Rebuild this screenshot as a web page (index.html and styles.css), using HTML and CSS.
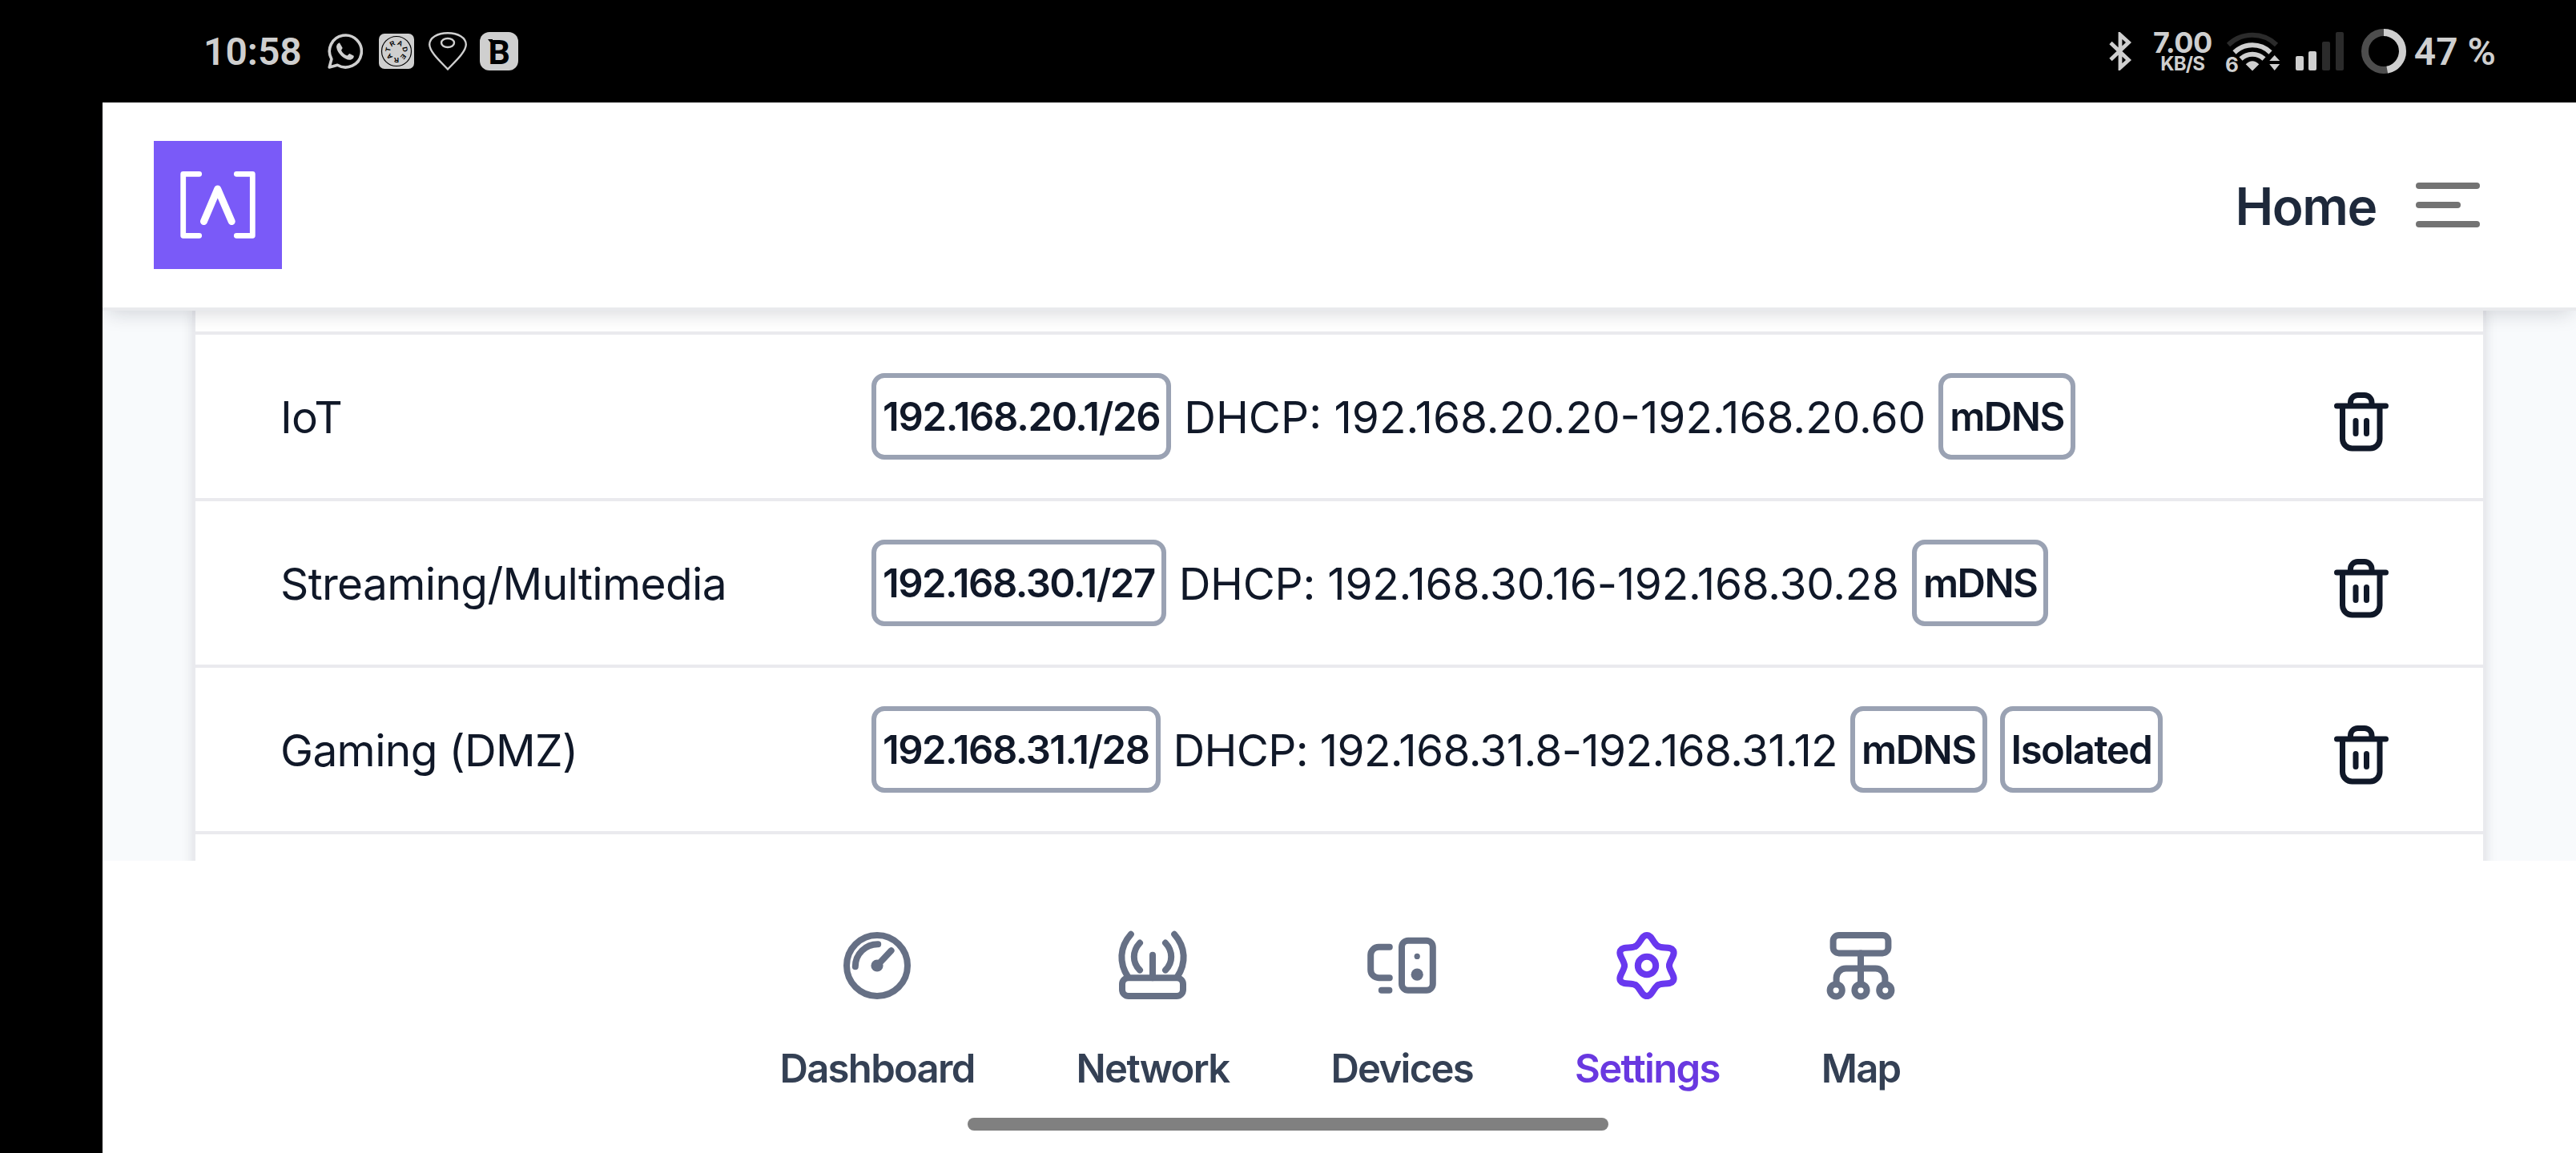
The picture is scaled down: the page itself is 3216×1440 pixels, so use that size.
FILE: index.html
```
<!DOCTYPE html>
<html lang="en">
<head>
  <meta charset="UTF-8" />
  <title>Settings</title>
  <link rel="stylesheet" href="styles.css">
</head>
<body>

  <!-- shared icons -->
  <svg class="defs" width="0" height="0">
    <symbol id="trash" viewBox="0 0 68 74">
      <path d="M3.500 17h61M20.500 17v-4.500a9 9 0 0 1 9-9h8.500a9 9 0 0 1 9 9V17M10.500 17v41a12 12 0 0 0 12 12h22.500a12 12 0 0 0 12-12V17M27 35.500v16M40.500 35.500v16" />
    </symbol>
    <path id="tooth" d="M-3.500-6.060C-2.100-6.860-1.600-9.500 0-9.500S2.100-6.860 3.500-6.060" />
  </svg>

  <div class="status-bar">
    <div class="status-left">
      <span class="time">10:58</span>
      <svg class="whatsapp" width="44" height="44" viewBox="0 0 44 44">
        <path d="M2.200 42l2.700-10.200A20 20 0 1 1 12.300 39.300z" fill="none" stroke="#cfcfcf" stroke-width="3.600" stroke-linejoin="round" />
        <path d="M15 11.500c-1.200-.4-4.300 2-3.900 5.800 1 7.300 9.600 15.500 16.500 15.500 3 0 5.600-2.600 5.100-5l-5.300-2.700c-1.200.4-1.900 2.400-3.100 2.300-3.200-1-5.600-3.500-7.200-6.500.2-1.300 1.600-1.900 1.500-3.100z" fill="#cfcfcf" />
      </svg>
      <svg class="tradera" width="44" height="44" viewBox="0 0 44 44">
        <rect width="44" height="44" rx="7" />
        <circle cx="22" cy="22" r="18.500" />
        <g>
          <text x="22" y="14" transform="rotate(-78 22 22)">T</text>
          <text x="22" y="14" transform="rotate(-28 22 22)">R</text>
          <text x="22" y="14" transform="rotate(24 22 22)">A</text>
          <text x="22" y="14" transform="rotate(78 22 22)">D</text>
          <text x="22" y="14" transform="rotate(129 22 22)">E</text>
          <text x="22" y="14" transform="rotate(180 22 22)">R</text>
          <text x="22" y="14" transform="rotate(232 22 22)">A</text>
        </g>
      </svg>
      <svg class="pin" width="48" height="48" viewBox="0 0 48 48" fill="none" stroke="#cfcfcf" stroke-width="2.400">
        <path d="M24 46.500C16 38 1.200 25 1.200 15.500 1.200 7 11 1.200 24 1.200S46.800 7 46.800 15.500C46.800 25 32 38 24 46.500z" />
        <ellipse cx="24" cy="13.500" rx="8" ry="5.500" />
      </svg>
      <svg class="b-app" width="48" height="48" viewBox="0 0 48 48">
        <rect width="48" height="48" rx="12" fill="#cfcfcf" />
        <path d="M10 9h6v3.800h-3z" />
        <text x="10.500" y="39.500">B</text>
      </svg>
    </div>

    <div class="status-right">
      <svg class="bluetooth" width="28" height="48" viewBox="0 0 28 48">
        <path d="M2 13.500L24.500 35 14 44.500V3.500l10.500 9.500L2 34.500" />
      </svg>
      <div class="speed">
        <span class="speed-value">7.00</span>
        <span class="speed-unit">KB/S</span>
      </div>
      <svg class="wifi" width="68" height="52" viewBox="0 0 68 52">
        <path d="M3 16A43 43 0 0 1 63 16" stroke="#2b2b2b" />
        <path d="M10.500 25.500a32 32 0 0 1 45 0M18.500 33.500a21 21 0 0 1 29 0" stroke="#cfcfcf" />
        <path class="solid" d="M33 48.500l-8.300-8.300q8.300-8 16.600 0zM60.700 29l6.500 7H54.200zM54.200 40h13l-6.500 8z" />
        <text x="-1" y="50">6</text>
      </svg>
      <svg class="signal" width="60" height="48" viewBox="0 0 60 48">
        <rect x="0" y="30" width="10" height="18" rx="2" fill="#cfcfcf" />
        <rect x="16" y="24" width="10" height="24" rx="2" fill="#cfcfcf" />
        <rect x="33" y="12" width="10" height="36" rx="2" fill="#2b2b2b" />
        <rect x="50" y="0" width="10" height="48" rx="2" fill="#2b2b2b" />
      </svg>
      <svg class="battery" width="56" height="56" viewBox="0 0 56 56">
        <circle cx="28" cy="28" r="23.500" stroke="#4d4d4d" />
        <circle cx="28" cy="28" r="23.500" stroke="#cfcfcf" pathLength="100" stroke-dasharray="47 53" transform="rotate(-90 28 28)" />
      </svg>
      <span class="percent">47 %</span>
    </div>
  </div>

  <div class="app">
    <header class="header">
      <svg class="logo" width="160" height="160" viewBox="0 0 160 160">
        <rect width="160" height="160" fill="#7a5af8" />
        <path d="M56.700 41.300h-20v77h20M103.300 41.300h20v77h-20" stroke-width="6.800" />
        <path d="M62.500 100.500L79.700 60l17.500 40.500" stroke-width="9" />
      </svg>
      <div class="header-right">
        <span class="page-name">Home</span>
        <div class="burger">
          <i></i>
          <i class="short"></i>
          <i></i>
        </div>
      </div>
    </header>

    <main class="content">
      <div class="card">
        <div class="row row-cut"></div>
        <div class="row">
          <div class="name">IoT</div>
          <div class="info">
            <span class="badge badge-wide">192.168.20.1/26</span>
            <span class="dhcp">DHCP: 192.168.20.20-192.168.20.60</span>
            <span class="badge">mDNS</span>
          </div>
          <svg class="trash" width="68" height="74"><use href="#trash" /></svg>
        </div>
        <div class="row">
          <div class="name">Streaming/Multimedia</div>
          <div class="info">
            <span class="badge">192.168.30.1/27</span>
            <span class="dhcp dhcp-snug">DHCP: 192.168.30.16-192.168.30.28</span>
            <span class="badge">mDNS</span>
          </div>
          <svg class="trash" width="68" height="74"><use href="#trash" /></svg>
        </div>
        <div class="row">
          <div class="name">Gaming (DMZ)</div>
          <div class="info">
            <span class="badge">192.168.31.1/28</span>
            <span class="dhcp dhcp-tight">DHCP: 192.168.31.8-192.168.31.12</span>
            <span class="badge">mDNS</span>
            <span class="badge">Isolated</span>
          </div>
          <svg class="trash" width="68" height="74"><use href="#trash" /></svg>
        </div>
        <div class="row"></div>
      </div>
    </main>

    <nav class="nav">
      <div class="nav-item">
        <svg viewBox="0 0 24 24">
          <circle cx="12" cy="12" r="9.500" />
          <path d="M5.200 12.300a7 7 0 0 1 7.100-7M12 12l4.400-4.700" />
          <circle class="dot" cx="12" cy="12" r="1.900" />
        </svg>
        <span>Dashboard</span>
      </div>
      <div class="nav-item">
        <svg viewBox="0 0 24 24">
          <rect x="2.500" y="15.800" width="19" height="5.700" rx="2" />
          <path d="M12 15.800V8.700M5.200 2.200c-3.600 4.100-3.700 9-.9 13.300M18.800 2.200c3.600 4.100 3.700 9 .9 13.300M8 4.900c-2.400 2.600-2.400 6.100 0 8.500M16 4.900c2.400 2.600 2.400 6.100 0 8.500" />
        </svg>
        <span>Network</span>
      </div>
      <div class="nav-item">
        <svg viewBox="0 0 24 24">
          <rect x="12" y="4.200" width="9.700" height="15.500" rx="2" />
          <path d="M8.200 6.200H4.800a2.500 2.500 0 0 0-2.500 2.500v4.600a2.500 2.500 0 0 0 2.500 2.500h3.400M5.700 19.700h2.400" />
          <circle class="dot" cx="16.800" cy="9.100" r=".9" />
          <circle class="dot" cx="16.800" cy="14.800" r="1.900" />
        </svg>
        <span>Devices</span>
      </div>
      <div class="nav-item active">
        <svg viewBox="-12 -12 24 24">
          <use href="#tooth" />
          <use href="#tooth" transform="rotate(60)" />
          <use href="#tooth" transform="rotate(120)" />
          <use href="#tooth" transform="rotate(180)" />
          <use href="#tooth" transform="rotate(240)" />
          <use href="#tooth" transform="rotate(300)" />
          <circle r="2.800" />
        </svg>
        <span>Settings</span>
      </div>
      <div class="nav-item">
        <svg viewBox="0 0 24 24">
          <rect x="3.400" y="2.500" width="17.200" height="5.600" rx="1.800" />
          <path d="M12 8.100v9.700M4.400 17.800v-2a3 3 0 0 1 3-2.900h9.200a3 3 0 0 1 3 2.900v2" />
          <circle cx="4.300" cy="19.700" r="1.900" />
          <circle cx="12" cy="19.700" r="1.900" />
          <circle cx="19.700" cy="19.700" r="1.900" />
        </svg>
        <span>Map</span>
      </div>
    </nav>
  </div>

  <div class="home-indicator"></div>

</body>
</html>
```
FILE: styles.css
```
html, body {
  margin: 0;
  padding: 0;
  height: 100%;
  overflow: hidden;
  font-family: Inter, sans-serif;
  background-color: #000;
}

* {
  box-sizing: border-box;
}

svg {
  display: block;
  flex-shrink: 0;
}

.defs {
  position: absolute;
}

/* phone status bar */
.status-bar {
  display: flex;
  justify-content: space-between;
  height: 128px;
  padding: 0 100px 0 254px;
  color: #cfcfcf;
}

.status-left,
.status-right {
  display: flex;
  align-items: center;
}

.time {
  width: 155px;
  font-family: Roboto, sans-serif;
  font-size: 48px;
  font-weight: 600;
}

.tradera {
  margin-left: 20px;
}

.tradera rect {
  fill: #cfcfcf;
}

.tradera circle {
  fill: none;
  stroke: #000;
  stroke-width: 1.2;
}

.tradera text {
  font: bold 8.5px "Liberation Sans", sans-serif;
  text-anchor: middle;
}

.pin {
  margin-left: 18px;
}

.b-app {
  margin-left: 16px;
}

.b-app text {
  font: bold 43px Roboto, sans-serif;
}

.bluetooth path {
  fill: none;
  stroke: #cfcfcf;
  stroke-width: 4.8;
}

.speed {
  display: flex;
  flex-direction: column;
  align-items: center;
  width: 80px;
  margin-left: 24px;
  font-weight: 700;
}

.speed-value {
  font-size: 36px;
  line-height: 30px;
  letter-spacing: -0.6px;
}

.speed-unit {
  font-size: 24px;
  line-height: 23px;
  letter-spacing: -0.8px;
}

.wifi {
  margin: 4px 0 0 14px;
  overflow: visible;
}

.wifi path {
  fill: none;
  stroke-width: 6;
}

.wifi .solid {
  fill: #cfcfcf;
}

.wifi text {
  font: bold 26px Inter, sans-serif;
  fill: #cfcfcf;
}

.signal {
  margin-left: 19px;
}

.battery {
  margin-left: 22px;
}

.battery circle {
  fill: none;
  stroke-width: 9;
}

.percent {
  margin-left: 10px;
  font-family: Roboto, sans-serif;
  font-size: 48px;
  font-weight: 600;
}

/* app window, right of the camera cutout */
.app {
  display: flex;
  flex-direction: column;
  height: 1312px;
  margin-left: 128px;
  background-color: #f8fafc;
}

.header {
  position: relative;
  display: flex;
  justify-content: space-between;
  align-items: center;
  height: 260px;
  padding: 0 120px 0 64px;
  background-color: #fff;
  border-bottom: 4px solid #e9eaed;
  box-shadow: 0 8px 24px -6px rgba(16, 24, 40, 0.18);
}

.logo path {
  fill: none;
  stroke: #fff;
  stroke-linecap: round;
  stroke-linejoin: round;
}

.header-right {
  display: flex;
  align-items: center;
}

.page-name {
  margin-right: 49px;
  padding-top: 2px;
  font-size: 64px;
  font-weight: 600;
  letter-spacing: -1.4px;
  color: #1e293b;
}

.burger {
  display: flex;
  flex-direction: column;
  gap: 16px;
}

.burger i {
  width: 80px;
  height: 8px;
  border-radius: 4px;
  background-color: #737373;
}

.burger .short {
  width: 56px;
}

.content {
  height: 687px;
  padding: 0 112px;
  overflow: hidden;
}

.card {
  background-color: #fff;
  border: solid #e9eaee;
  border-width: 0 4px;
  box-shadow: 0 0 14px rgba(16, 24, 40, 0.1);
}

.row {
  display: grid;
  grid-template-columns: 738px 1fr auto;
  align-items: center;
  height: 208px;
  padding: 0 118px 0 106px;
  border-bottom: 4px solid #eaeaee;
  color: #101828;
}

.row-cut {
  height: 30px;
}

.name,
.dhcp {
  padding-top: 2px;
  font-size: 55px;
}

.name {
  letter-spacing: -0.65px;
}

.info {
  display: flex;
  align-items: center;
  gap: 16px;
  white-space: nowrap;
}

.dhcp-snug {
  letter-spacing: -0.25px;
}

.dhcp-tight {
  letter-spacing: -0.65px;
}

.badge {
  height: 108px;
  padding: 0 8px;
  border: 6px solid #9aa2b3;
  border-radius: 16px;
  font-size: 49px;
  font-weight: 600;
  line-height: 97px;
  letter-spacing: -1.5px;
}

.badge-wide {
  letter-spacing: -1.3px;
}

.trash {
  margin-top: 14px;
  fill: none;
  stroke: #101828;
  stroke-width: 7;
  stroke-linecap: round;
}

.nav {
  display: flex;
  flex: 1;
  justify-content: center;
  gap: 127px;
  padding: 83px 0 0 2px;
  background-color: #fff;
}

.nav-item {
  display: flex;
  flex-direction: column;
  align-items: center;
  gap: 51px;
  font-size: 49px;
  font-weight: 600;
  line-height: 60px;
  letter-spacing: -1.7px;
  color: #344054;
}

.nav-item svg {
  width: 96px;
  height: 96px;
  fill: none;
  stroke: #667085;
  stroke-width: 2;
  stroke-linecap: round;
}

.nav-item .dot {
  fill: #667085;
  stroke: none;
}

.nav-item.active {
  color: #6938e0;
}

.nav-item.active svg {
  stroke: #6938ef;
}

/* gesture pill drawn over the page */
.home-indicator {
  position: absolute;
  left: 1208px;
  bottom: 28px;
  width: 800px;
  height: 16px;
  border-radius: 8px;
  background-color: #808080;
}
```
